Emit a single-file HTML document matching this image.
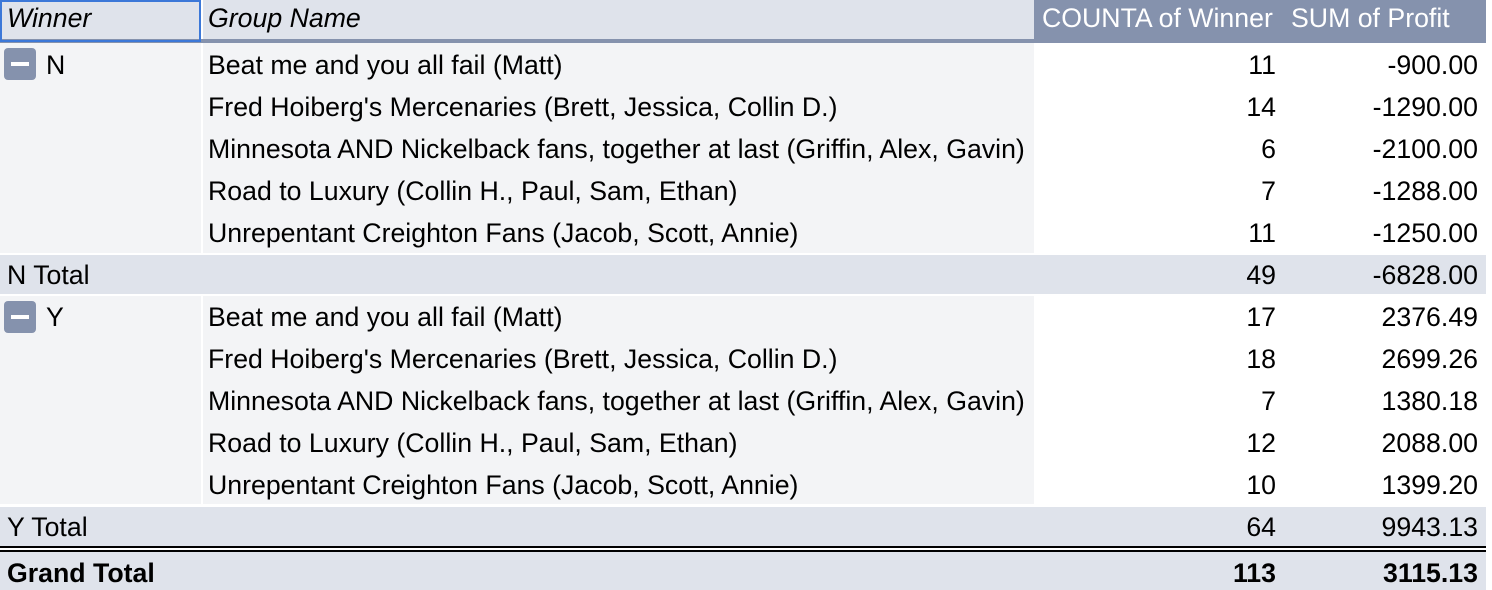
<!DOCTYPE html>
<html><head><style>
*{margin:0;padding:0;box-sizing:border-box}
body{width:1492px;height:590px;background:#fff;font-family:"Liberation Sans",Arial,sans-serif;font-size:26.7px;color:#000;position:relative;overflow:hidden}
.a{position:absolute;white-space:nowrap;line-height:30px}
.r{text-align:right}
</style></head><body>
<div class="a" style="left:0;top:0;width:1034px;height:39px;background:#dfe3eb"></div>
<div class="a" style="left:1034px;top:0;width:452px;height:39px;background:#8592ad"></div>
<div class="a" style="left:0;top:39px;width:1486px;height:4px;background:#8592ad"></div>
<div class="a" style="left:0;top:0;width:201px;height:42px;border:2px solid #3c78d8"></div>
<div class="a" style="left:201px;top:0;width:2px;height:39px;background:#fff"></div>
<div class="a" style="left:7px;top:3px;font-style:italic">Winner</div>
<div class="a" style="left:208px;top:3px;font-style:italic">Group Name</div>
<div class="a" style="left:1042px;top:3px;color:#fff">COUNTA of Winner</div>
<div class="a" style="left:1291px;top:3px;color:#fff">SUM of Profit</div>

<div class="a" style="left:0;top:43px;width:1034px;height:210px;background:#f3f4f6"></div>
<div class="a" style="left:201px;top:43px;width:2px;height:210px;background:#fff"></div>
<div class="a" style="left:4px;top:48px;width:32px;height:32px;border-radius:4px;background:#8592ad"></div>
<div class="a" style="left:11px;top:62px;width:18px;height:4px;background:#fff"></div>
<div class="a" style="left:46px;top:50px">N</div>
<div class="a" style="left:0;top:255px;width:1486px;height:39px;background:#dfe3eb"></div>
<div class="a" style="left:7px;top:260px">N Total</div>

<div class="a" style="left:0;top:296px;width:1034px;height:208px;background:#f3f4f6"></div>
<div class="a" style="left:201px;top:296px;width:2px;height:208px;background:#fff"></div>
<div class="a" style="left:4px;top:301px;width:32px;height:32px;border-radius:4px;background:#8592ad"></div>
<div class="a" style="left:11px;top:315px;width:18px;height:4px;background:#fff"></div>
<div class="a" style="left:46px;top:302px">Y</div>
<div class="a" style="left:0;top:507px;width:1486px;height:39px;background:#dfe3eb"></div>
<div class="a" style="left:7px;top:512px">Y Total</div>

<div class="a" style="left:0;top:546px;width:1486px;height:2px;background:#000"></div>
<div class="a" style="left:0;top:550px;width:1486px;height:2px;background:#000"></div>
<div class="a" style="left:0;top:552px;width:1486px;height:38px;background:#dfe3eb"></div>
<div class="a" style="left:7px;top:558px;font-weight:bold">Grand Total</div>

<div class="a" style="left:208px;top:50px">Beat me and you all fail (Matt)</div>
<div class="a" style="left:208px;top:92px">Fred Hoiberg's Mercenaries (Brett, Jessica, Collin D.)</div>
<div class="a" style="left:208px;top:134px">Minnesota AND Nickelback fans, together at last (Griffin, Alex, Gavin)</div>
<div class="a" style="left:208px;top:176px">Road to Luxury (Collin H., Paul, Sam, Ethan)</div>
<div class="a" style="left:208px;top:218px">Unrepentant Creighton Fans (Jacob, Scott, Annie)</div>
<div class="a" style="left:208px;top:302px">Beat me and you all fail (Matt)</div>
<div class="a" style="left:208px;top:344px">Fred Hoiberg's Mercenaries (Brett, Jessica, Collin D.)</div>
<div class="a" style="left:208px;top:386px">Minnesota AND Nickelback fans, together at last (Griffin, Alex, Gavin)</div>
<div class="a" style="left:208px;top:428px">Road to Luxury (Collin H., Paul, Sam, Ethan)</div>
<div class="a" style="left:208px;top:470px">Unrepentant Creighton Fans (Jacob, Scott, Annie)</div>

<div class="a r" style="left:1040px;width:236px;top:50px">11</div><div class="a r" style="left:1290px;width:188px;top:50px">-900.00</div>
<div class="a r" style="left:1040px;width:236px;top:92px">14</div><div class="a r" style="left:1290px;width:188px;top:92px">-1290.00</div>
<div class="a r" style="left:1040px;width:236px;top:134px">6</div><div class="a r" style="left:1290px;width:188px;top:134px">-2100.00</div>
<div class="a r" style="left:1040px;width:236px;top:176px">7</div><div class="a r" style="left:1290px;width:188px;top:176px">-1288.00</div>
<div class="a r" style="left:1040px;width:236px;top:218px">11</div><div class="a r" style="left:1290px;width:188px;top:218px">-1250.00</div>
<div class="a r" style="left:1040px;width:236px;top:260px">49</div><div class="a r" style="left:1290px;width:188px;top:260px">-6828.00</div>
<div class="a r" style="left:1040px;width:236px;top:302px">17</div><div class="a r" style="left:1290px;width:188px;top:302px">2376.49</div>
<div class="a r" style="left:1040px;width:236px;top:344px">18</div><div class="a r" style="left:1290px;width:188px;top:344px">2699.26</div>
<div class="a r" style="left:1040px;width:236px;top:386px">7</div><div class="a r" style="left:1290px;width:188px;top:386px">1380.18</div>
<div class="a r" style="left:1040px;width:236px;top:428px">12</div><div class="a r" style="left:1290px;width:188px;top:428px">2088.00</div>
<div class="a r" style="left:1040px;width:236px;top:470px">10</div><div class="a r" style="left:1290px;width:188px;top:470px">1399.20</div>
<div class="a r" style="left:1040px;width:236px;top:512px">64</div><div class="a r" style="left:1290px;width:188px;top:512px">9943.13</div>
<div class="a r" style="left:1040px;width:236px;top:558px;font-weight:bold">113</div><div class="a r" style="left:1290px;width:188px;top:558px;font-weight:bold">3115.13</div>
</body></html>
